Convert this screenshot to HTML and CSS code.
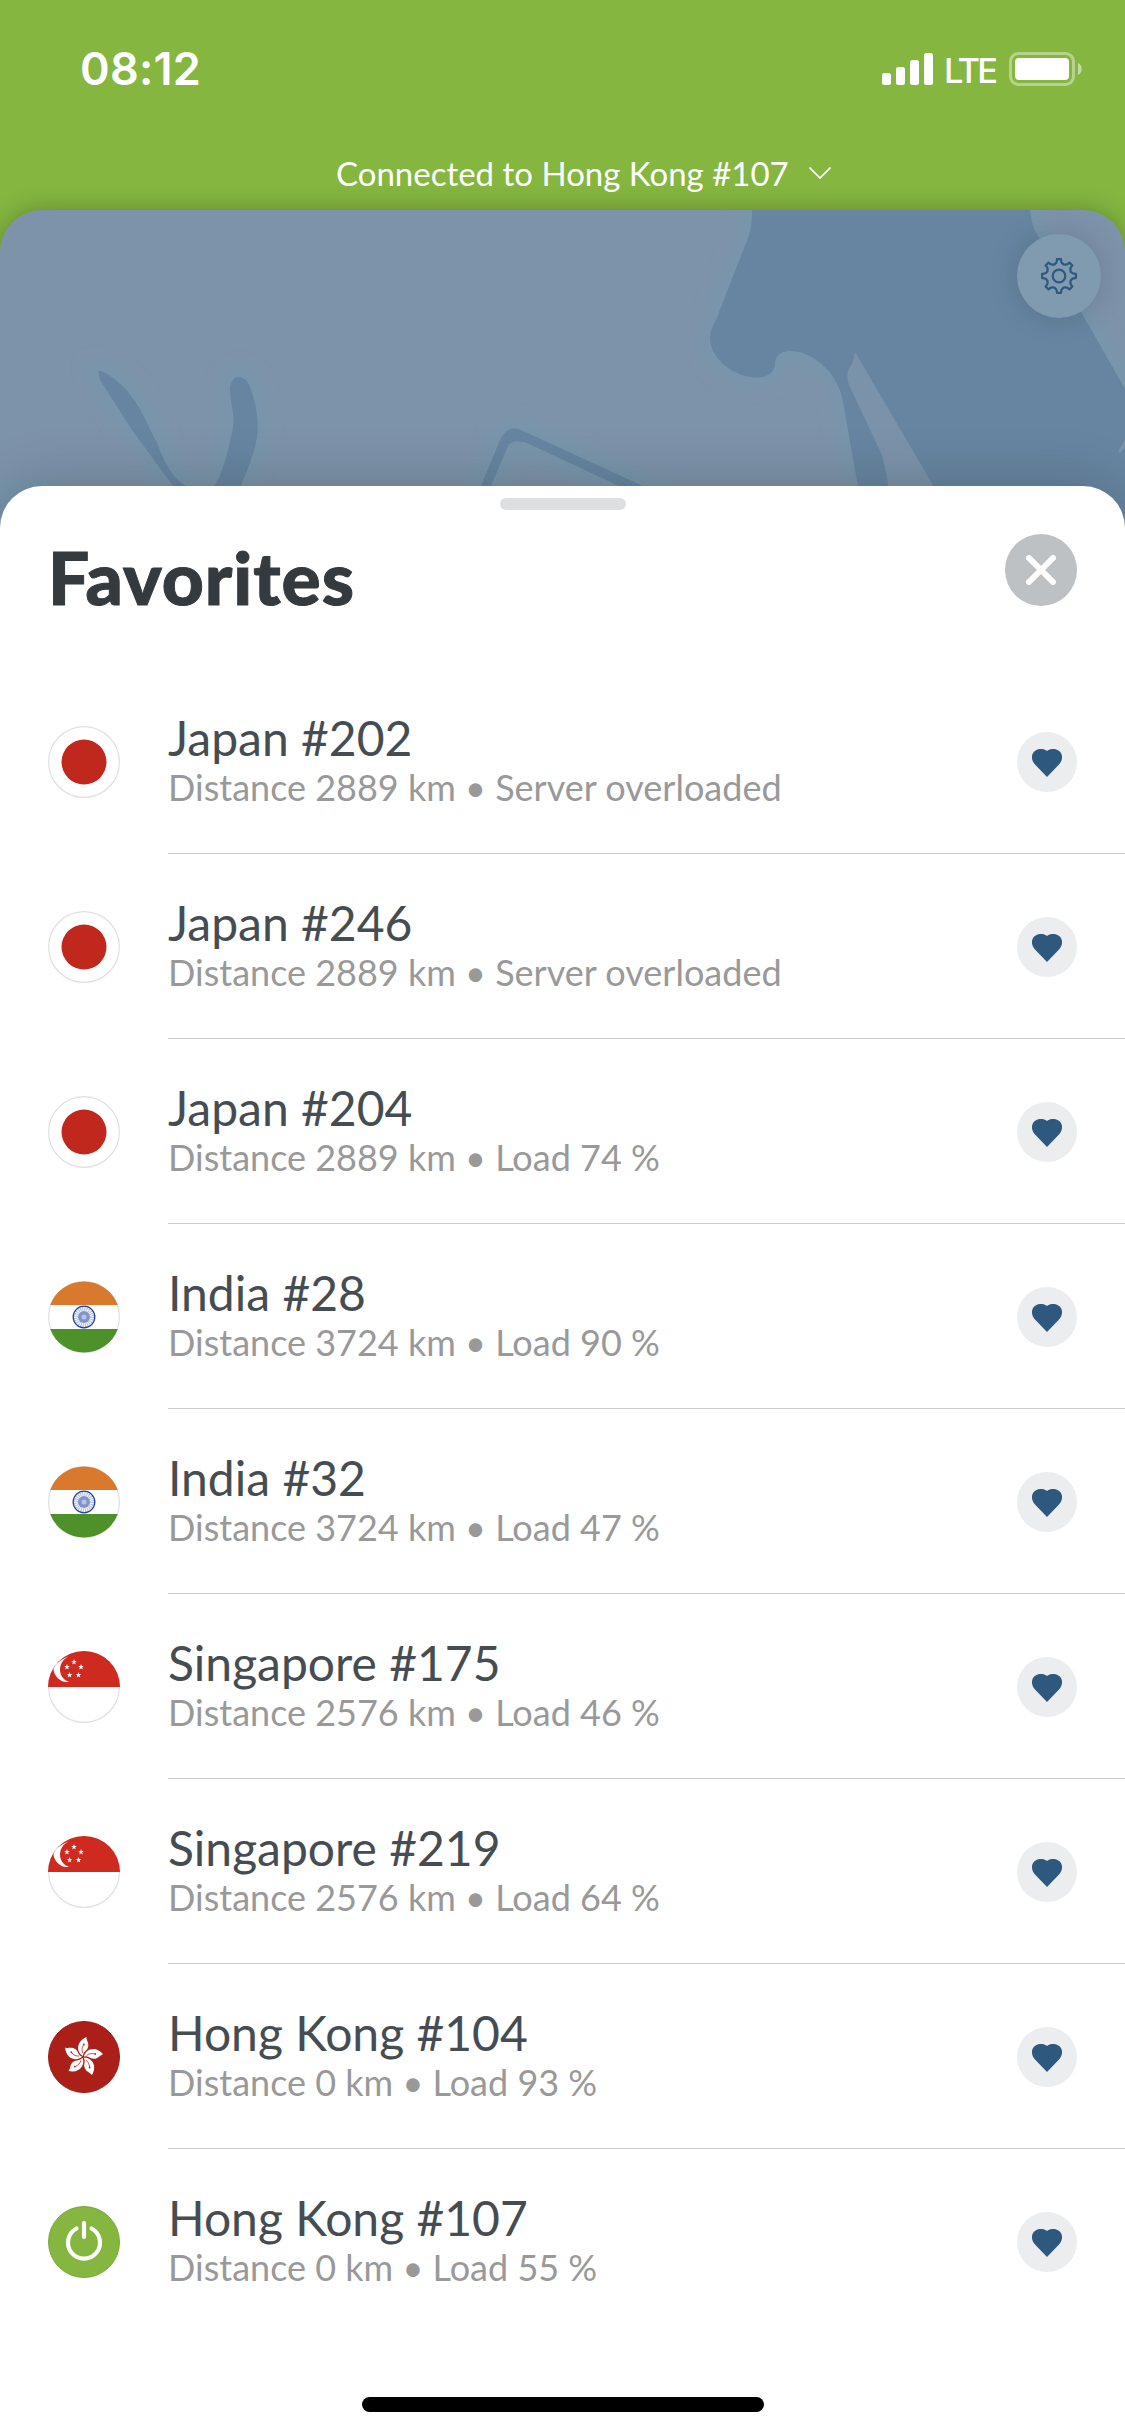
FILE: index.html
```html
<!DOCTYPE html>
<html lang="en">
    <head>
        <meta charset="UTF-8" />
        <meta name="viewport" content="width=device-width, initial-scale=1.0"/>
        <title>Favorites</title>
        <link rel="stylesheet" href="styles.css">
    </head>
    <body>
        <!-- shared icons -->
        <svg class="sprite">
            <symbol id="heart" viewBox="0 0 30 28">
                <path d="M15 28L3 15.500C-1 11 -1 5.500 2.500 2.300C6 -0.900 12 -0.700 15 2C18 -0.700 24 -0.900 27.500 2.300C31 5.500 31 11 27 15.500Z"/>
            </symbol>
            <symbol id="star" viewBox="-3 -3 6 6">
                <path d="M0 -3L0.700 -1L2.850 -0.930L1.140 0.370L1.760 2.430L0 1.200L-1.760 2.430L-1.140 0.370L-2.850 -0.930L-0.700 -1Z"/>
            </symbol>
            <symbol id="japan" viewBox="0 0 72 72">
                <circle cx="36" cy="36" r="35.400" fill="#fff" stroke="#e0e0e0" stroke-width="1.200"/>
                <circle cx="36" cy="36" r="22.500" fill="#c0271d"/>
            </symbol>
            <symbol id="india" viewBox="0 0 72 72">
                <circle cx="36" cy="36" r="35.400" fill="#fff" stroke="#e0e0e0" stroke-width="1.200"/>
                <path d="M2.200 24A36 36 0 0 1 69.800 24Z" fill="#d8792d"/>
                <path d="M2.200 48A36 36 0 0 0 69.800 48Z" fill="#4e9029"/>
                <circle cx="36" cy="36" r="8" fill="none" stroke="#b3bfdf" stroke-width="4" stroke-dasharray="1.100 1"/>
                <circle cx="36" cy="36" r="6" fill="#8193c8"/>
                <circle cx="36" cy="36" r="2.500" fill="#b9c3e2"/>
                <circle cx="36" cy="36" r="10.800" fill="none" stroke="#1f40a0" stroke-width="1.300"/>
            </symbol>
            <symbol id="singapore" viewBox="0 0 72 72">
                <circle cx="36" cy="36" r="35.400" fill="#fff" stroke="#e0e0e0" stroke-width="1.200"/>
                <path d="M0 36A36 36 0 0 1 72 36Z" fill="#cf2a1f"/>
                <path d="M21 5.500C13 8 6 14 5.500 18.500C6 25 13 32.500 21 30.800C9 27.500 9 10 21 5.500Z" fill="#fff"/>
                <g fill="#fff">
                    <use href="#star" x="23" y="8" width="6" height="6"/>
                    <use href="#star" x="16" y="13" width="6" height="6"/>
                    <use href="#star" x="30" y="13" width="6" height="6"/>
                    <use href="#star" x="18.500" y="21" width="6" height="6"/>
                    <use href="#star" x="27.500" y="21" width="6" height="6"/>
                </g>
            </symbol>
            <symbol id="petal" viewBox="-20 -20 40 40">
                <path d="M0 -1C-6 -4 -8 -15 3.500 -20C3 -17 6.500 -14 5 -9.500C4 -6 0 -5.500 0 -1Z" fill="#fff"/>
                <path d="M-0.300 -4C-1.500 -7 -1 -9 0.500 -12" fill="none" stroke="#aa2018" stroke-width="0.700"/>
                <circle cx="0.900" cy="-12.500" r="0.900" fill="#aa2018"/>
            </symbol>
            <symbol id="hongkong" viewBox="0 0 72 72">
                <circle cx="36" cy="36" r="35.500" fill="#aa2018" stroke="#9c1d16"/>
                <use href="#petal" x="15" y="16" width="40" height="40"/>
                <use href="#petal" x="15" y="16" width="40" height="40" transform="rotate(72 35 36)"/>
                <use href="#petal" x="15" y="16" width="40" height="40" transform="rotate(144 35 36)"/>
                <use href="#petal" x="15" y="16" width="40" height="40" transform="rotate(216 35 36)"/>
                <use href="#petal" x="15" y="16" width="40" height="40" transform="rotate(288 35 36)"/>
            </symbol>
            <symbol id="power" viewBox="0 0 72 72">
                <circle cx="36" cy="36" r="35.500" fill="#84b640" stroke="#7aa93b"/>
                <path d="M36 17V31M28.500 22.500A16 16 0 1 0 43.500 22.500" fill="none" stroke="#fff" stroke-width="4.200" stroke-linecap="round"/>
            </symbol>
        </svg>

        <div class="phone">
            <div class="status-bar">
                <div class="time">08:12</div>
                <div class="status-icons">
                    <svg width="52" height="34" viewBox="0 0 52 34" fill="#fff">
                        <rect x="0" y="21" width="9" height="12" rx="2.500"/>
                        <rect x="14" y="15" width="9" height="18" rx="2.500"/>
                        <rect x="28" y="8" width="9" height="25" rx="2.500"/>
                        <rect x="42" y="1" width="9" height="32" rx="2.500"/>
                    </svg>
                    <span class="network">LTE</span>
                    <svg width="74" height="34" viewBox="0 0 74 34" fill="#fff">
                        <rect x="1.500" y="1.500" width="63" height="31" rx="8" fill="none" stroke="#fff" stroke-width="3" opacity="0.400"/>
                        <rect x="6" y="6" width="54" height="22" rx="4"/>
                        <path d="M69 11C74 13 74 21 69 23Z" opacity="0.500"/>
                    </svg>
                </div>
            </div>

            <div class="connection">
                <span class="connection-text">Connected to Hong Kong #107</span>
                <svg width="22" height="12" viewBox="0 0 22 12"><path d="M0.500 0.500L11 11L21.500 0.500" fill="none" stroke="#fff" stroke-width="1.700"/></svg>
            </div>

            <div class="map">
                <svg class="land" width="1125" height="330" viewBox="0 210 1125 330">
                    <defs>
                        <filter id="soft" x="-10%" y="-10%" width="120%" height="120%"><feGaussianBlur stdDeviation="7"/></filter>
                        <g id="shapes">
                            <path d="M752 210C752 222 751 231 748 238L716 320C712 328 710 332 710 339C711 360 735 377 756 377.500C766 378 774 373 775 365C774 356 782 350 791 351C817 352 840 378 843 402C850 440 853 460 860 495L860 540H1125V389L1084 317L1039 238C1033 228 1031 220 1030 210Z"/>
                            <path d="M98 371C103 369 124 385 132 397C142 410 150 430 157 443C164 462 174 481 187 486C195 491 207 492 214 486C220 480 228 455 233 427C235 412 229 400 230 387C232 379 235 377 239 377C248 378 250 386 252 393C257 407 259 425 257 437C254 455 247 470 241 486L235 500H184L173 486L132 430L100 380Z"/>
                            <path d="M481 486L500 440C505 430 512 426 521 430L643 486L660 500L619 486L527 443C519 440 510 440 507 448L491 486Z"/>
                        </g>
                    </defs>
                    <use href="#shapes" fill="#7895ab" stroke="#7895ab" stroke-width="22" filter="url(#soft)"/>
                    <use href="#shapes" fill="#6785a1"/>
                    <path d="M855 352C854 356 854 360 852 364C848 368 846 375 849 385L881 453C884 462 887 475 889 490L940 497Z" fill="#7b93aa"/>
                    <path d="M1118 451L1125 440V447L1120 453Z" fill="#7b93aa"/>
                    <!-- sea colour under the left corner of the sheet -->
                    <rect x="0" y="480" width="60" height="60" fill="#7895ab"/>
                </svg>
                <div class="settings">
                    <svg width="38" height="38" viewBox="-19 -19 38 38" fill="none" stroke="#2f587f" stroke-width="2.200" stroke-linejoin="round">
                        <circle r="6.300"/>
                        <path id="gear"/>
                    </svg>
                </div>
            </div>

            <div class="sheet">
                <div class="handle"></div>
                <div class="sheet-header">
                    <h1>Favorites</h1>
                    <div class="close">
                        <svg width="30" height="30" viewBox="0 0 30 30"><path d="M3 3L27 27M27 3L3 27" stroke="#fff" stroke-width="6" stroke-linecap="round"/></svg>
                    </div>
                </div>
                <div class="list" id="list"></div>
                <div class="home-indicator"></div>
            </div>
        </div>

        <script>
            const servers = [
                { flag: 'japan', name: 'Japan #202', info: 'Distance 2889 km • Server overloaded' },
                { flag: 'japan', name: 'Japan #246', info: 'Distance 2889 km • Server overloaded' },
                { flag: 'japan', name: 'Japan #204', info: 'Distance 2889 km • Load 74 %' },
                { flag: 'india', name: 'India #28', info: 'Distance 3724 km • Load 90 %' },
                { flag: 'india', name: 'India #32', info: 'Distance 3724 km • Load 47 %' },
                { flag: 'singapore', name: 'Singapore #175', info: 'Distance 2576 km • Load 46 %' },
                { flag: 'singapore', name: 'Singapore #219', info: 'Distance 2576 km • Load 64 %' },
                { flag: 'hongkong', name: 'Hong Kong #104', info: 'Distance 0 km • Load 93 %' },
                { flag: 'power', name: 'Hong Kong #107', info: 'Distance 0 km • Load 55 %' }
            ];

            document.getElementById('list').innerHTML = servers.map(s => `
                <div class="row">
                    <svg class="flag"><use href="#${s.flag}"/></svg>
                    <div class="row-body">
                        <div class="row-text">
                            <div class="name">${s.name}</div>
                            <div class="info">${s.info}</div>
                        </div>
                        <div class="favorite"><svg width="30" height="28"><use href="#heart"/></svg></div>
                    </div>
                </div>`).join('');

            // eight teeth, each one a flat tip with curved valleys between
            function gearPath() {
                const at = (r, deg) => {
                    const a = deg * Math.PI / 180;
                    return (r * Math.cos(a)).toFixed(2) + ' ' + (r * Math.sin(a)).toFixed(2);
                };
                let d = '';
                for (let i = 0; i < 8; i++) {
                    const c = i * 45;
                    d += (i ? 'L' : 'M') + at(17, c - 7) + 'L' + at(17, c + 7);
                    d += 'Q' + at(13.2, c + 9) + ' ' + at(13, c + 17);
                    d += 'Q' + at(12, c + 22.5) + ' ' + at(13, c + 28);
                    d += 'Q' + at(13.2, c + 36) + ' ' + at(17, c + 38);
                }
                return d + 'Z';
            }
            document.getElementById('gear').setAttribute('d', gearPath());
        </script>
    </body>
</html>
```
FILE: styles.css
```css
* {
    margin: 0;
    padding: 0;
    box-sizing: border-box;
}

body {
    font-family: Lato, sans-serif;
    background-color: #84b640;
}

svg {
    display: block;
}

.sprite {
    position: absolute;
    width: 0;
    height: 0;
}

.phone {
    width: 1125px;
    height: 2436px;
    display: flex;
    flex-direction: column;
    overflow: hidden;
    background-color: #84b640;
}

.status-bar {
    height: 138px;
    padding: 0 42px 0 80px;
    display: flex;
    justify-content: space-between;
    align-items: center;
    color: #fff;
    font-family: Inter, sans-serif;
}

.time {
    padding-bottom: 2px;
    font-size: 45px;
    font-weight: 600;
    letter-spacing: 0.2px;
}

.status-icons {
    display: flex;
    align-items: center;
}

.network {
    width: 75px;
    padding: 3px 0 0 10px;
    font-size: 34.5px;
    font-weight: 500;
    letter-spacing: -2.8px;
}

.connection {
    height: 72px;
    padding: 0 294px 2px 336px;
    display: flex;
    align-items: center;
    justify-content: space-between;
    color: #fff;
}

.connection-text {
    font-size: 33px;
    white-space: nowrap;
}

/* runs on under the rounded corners of the sheet */
.map {
    height: 318px;
    margin-bottom: -42px;
    padding: 24px;
    border-radius: 42px 42px 0 0;
    position: relative;
    display: flex;
    justify-content: flex-end;
    background-color: #7d93aa;
    box-shadow: 0 0 24px rgba(0,0,0,0.25);
}

.land {
    position: absolute;
    left: 0;
    top: 0;
    border-radius: 42px 42px 0 0;
}

.settings {
    width: 84px;
    height: 84px;
    border-radius: 50%;
    position: relative;
    display: flex;
    align-items: center;
    justify-content: center;
    background-color: #809bb0;
    box-shadow: 0 0 30px rgba(0,0,0,0.15);
}

.sheet {
    flex: 1;
    position: relative;
    display: flex;
    flex-direction: column;
    align-items: center;
    padding-top: 12px;
    background-color: #fff;
    border-radius: 42px 42px 0 0;
    box-shadow: 0 0 60px rgba(0,0,0,0.2);
}

.handle {
    width: 126px;
    height: 12px;
    border-radius: 6px;
    background-color: #dddfe1;
}

.sheet-header {
    width: 100%;
    height: 159px;
    padding: 24px 48px 0;
    display: flex;
    justify-content: space-between;
    align-items: flex-start;
}

h1 {
    font-size: 73px;
    font-weight: 900;
    line-height: 87px;
    letter-spacing: 1px;
    color: #343a3e;
    -webkit-text-stroke: 1px #343a3e;
}

.close {
    width: 72px;
    height: 72px;
    border-radius: 50%;
    display: flex;
    align-items: center;
    justify-content: center;
    background-color: #bdc1c4;
}

.list {
    width: 100%;
    flex: 1;
}

.row {
    height: 185px;
    padding-left: 48px;
    display: flex;
    align-items: center;
    gap: 48px;
}

.flag {
    width: 72px;
    height: 72px;
}

.row-body {
    flex: 1;
    height: 185px;
    padding-right: 48px;
    display: flex;
    align-items: center;
    justify-content: space-between;
    border-bottom: 1px solid #cacccd;
}

.row:last-child .row-body {
    border-bottom-color: transparent;
}

.row-text {
    padding-bottom: 2px;
}

.name {
    font-size: 48px;
    line-height: 54px;
    color: #454d52;
}

.info {
    font-size: 36px;
    line-height: 44px;
    color: #999;
}

.favorite {
    width: 60px;
    height: 60px;
    margin-top: 2px;
    padding-top: 2px;
    border-radius: 50%;
    display: flex;
    align-items: center;
    justify-content: center;
    background-color: #ebedee;
    fill: #2f587f;
}

.home-indicator {
    width: 402px;
    height: 15px;
    margin-bottom: 24px;
    border-radius: 8px;
    background-color: #000;
}
```
